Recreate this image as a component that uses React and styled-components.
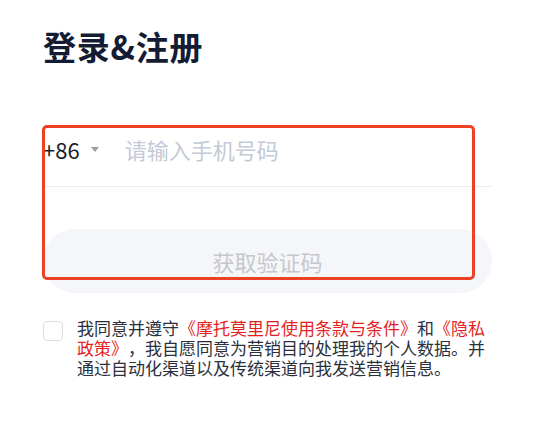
import React from "react";
import styled, { createGlobalStyle } from "styled-components";

const Global = createGlobalStyle`
  html, body { margin: 0; padding: 0; background: #ffffff; }
  body { font-family: "Noto Sans CJK SC", "Noto Sans", sans-serif; text-spacing-trim: space-all; }
  * { box-sizing: border-box; }
`;

const Page = styled.div`
  padding: 30px 43px 0 43px;
  width: 535px;
`;

const Title = styled.h1`
  margin: 0;
  font-size: 33px;
  line-height: 1;
  font-weight: 700;
  color: #141c33;
  letter-spacing: 0.8px;
`;

const Form = styled.div`
  position: relative;
  margin-top: 55px;
`;

const PhoneRow = styled.div`
  display: flex;
  align-items: center;
  height: 69px;
  padding-bottom: 6px;
  border-bottom: 1px solid #ebecf0;
`;

const Code = styled.span`
  font-size: 22px;
  color: #1b1f2a;
  line-height: 1;
`;

const Caret = styled.span`
  width: 0;
  height: 0;
  margin-left: 11px;
  border-left: 4.5px solid transparent;
  border-right: 4.5px solid transparent;
  border-top: 5px solid #9a9ca3;
`;

const PhoneInput = styled.input`
  flex: 1;
  margin-left: 26px;
  border: none;
  outline: none;
  padding: 0;
  font-family: inherit;
  font-size: 22px;
  color: #1b1f2a;
  background: transparent;
  &::placeholder { color: #c3cad8; }
`;

const SendButton = styled.button`
  display: block;
  width: 100%;
  height: 64px;
  margin-top: 42px;
  border: none;
  border-radius: 32px;
  background: #f5f6fa;
  font-family: inherit;
  font-size: 22px;
  color: #c6c7cc;
  cursor: default;
`;

const Highlight = styled.div`
  position: absolute;
  left: -1px;
  top: 7px;
  width: 433px;
  height: 155px;
  border: 3px solid #ec4125;
  border-radius: 5px;
  pointer-events: none;
`;

const Agree = styled.div`
  display: flex;
  align-items: flex-start;
  margin-top: 25px;
`;

const Box = styled.span`
  flex: none;
  width: 20px;
  height: 20px;
  margin-top: 3px;
  border: 1px solid #dadde4;
  border-radius: 4px;
  background: #fff;
`;

const AgreeText = styled.p`
  margin: 0 0 0 14px;
  font-size: 17px;
  line-height: 20px;
  color: #2b303d;
  text-spacing-trim: space-all;
`;

const Link = styled.span`
  color: #e41f1f;
`;

export default function App() {
  return (
    <>
      <Global />
      <Page>
        <Title>登录&amp;注册</Title>
        <Form>
          <PhoneRow>
            <Code>+86</Code>
            <Caret />
            <PhoneInput placeholder="请输入手机号码" />
          </PhoneRow>
          <SendButton>获取验证码</SendButton>
          <Highlight />
        </Form>
        <Agree>
          <Box />
          <AgreeText>
            我同意并遵守<Link>《摩托莫里尼使用条款与条件》</Link>和<Link>《隐私政策》</Link>，我自愿同意为营销目的处理我的个人数据。并通过自动化渠道以及传统渠道向我发送营销信息。
          </AgreeText>
        </Agree>
      </Page>
    </>
  );
}
